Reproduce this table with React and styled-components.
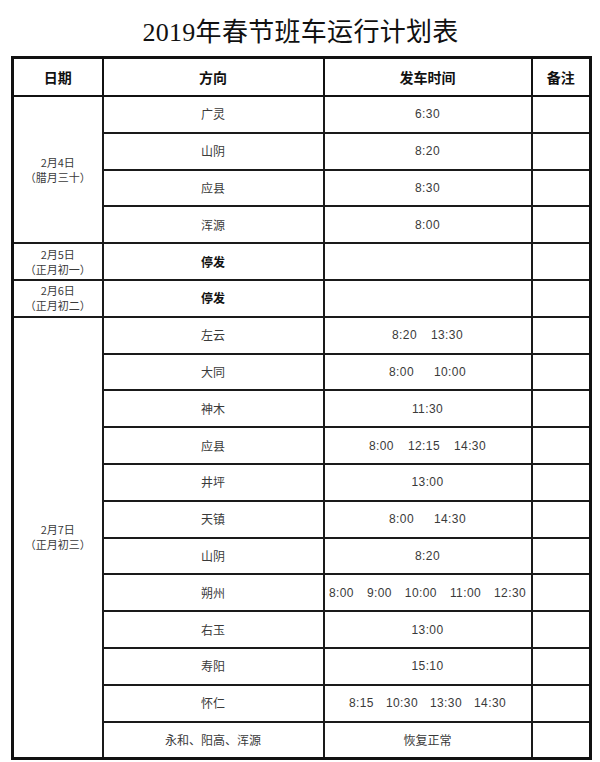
import React from 'react';
import styled, { createGlobalStyle } from 'styled-components';

const Global = createGlobalStyle`
  html, body { margin: 0; padding: 0; background: #fff; }
  body { font-family: "Noto Sans CJK SC", "Noto Sans", sans-serif; }
`;

const Page = styled.div`
  width: 600px;
  box-sizing: border-box;
  padding: 0 10px 0 11px;
`;

const Title = styled.h1`
  margin: 0;
  box-sizing: border-box;
  height: 56px;
  padding-top: 18px;
  font-family: "Liberation Serif", "Noto Sans CJK SC", serif;
  font-weight: 400;
  font-size: 26px;
  line-height: 30px;
  color: #111;
  text-align: center;
  letter-spacing: 0.3px;
`;

const Table = styled.table`
  width: 578px;
  table-layout: fixed;
  border-collapse: collapse;
  border: 3px solid #111;
`;

const HeadCell = styled.th`
  height: 36px;
  padding: 0;
  border: 2px solid #111;
  font-family: "Noto Sans CJK SC", sans-serif;
  font-weight: 700;
  font-size: 14px;
  color: #111;
  text-align: center;
  vertical-align: middle;
`;

const Row = styled.tr`
  height: 36.8px;
`;

const Cell = styled.td`
  padding: 0;
  border: 2px solid #1a1a1a;
  text-align: center;
  vertical-align: middle;
  font-family: "Noto Sans CJK SC", sans-serif;
  font-size: 12px;
  font-weight: ${p => (p.$bold ? 700 : 400)};
  color: ${p => (p.$bold ? '#111' : '#3a3a3a')};
  line-height: 16px;
`;

const DateLine = styled.div`
  font-size: 11px;
  line-height: 15px;
  color: #3a3a3a;
`;

const Times = styled.div`
  display: flex;
  justify-content: center;
  gap: ${p => p.$gap}px;
  font-family: "Liberation Sans", sans-serif;
  font-size: 12px;
  letter-spacing: 0.4px;
  color: #3a3a3a;
  white-space: nowrap;
`;

const schedule = [
  {
    date: '2月4日',
    lunar: '（腊月三十）',
    rows: [
      { dir: '广灵', times: ['6:30'] },
      { dir: '山阴', times: ['8:20'] },
      { dir: '应县', times: ['8:30'] },
      { dir: '浑源', times: ['8:00'] },
    ],
  },
  { date: '2月5日', lunar: '（正月初一）', rows: [{ dir: '停发', bold: true, times: [] }] },
  { date: '2月6日', lunar: '（正月初二）', rows: [{ dir: '停发', bold: true, times: [] }] },
  {
    date: '2月7日',
    lunar: '（正月初三）',
    rows: [
      { dir: '左云', times: ['8:20', '13:30'] },
      { dir: '大同', times: ['8:00', '10:00'], gap: 20 },
      { dir: '神木', times: ['11:30'] },
      { dir: '应县', times: ['8:00', '12:15', '14:30'] },
      { dir: '井坪', times: ['13:00'] },
      { dir: '天镇', times: ['8:00', '14:30'], gap: 20 },
      { dir: '山阴', times: ['8:20'] },
      { dir: '朔州', times: ['8:00', '9:00', '10:00', '11:00', '12:30'], gap: 13 },
      { dir: '右玉', times: ['13:00'] },
      { dir: '寿阳', times: ['15:10'] },
      { dir: '怀仁', times: ['8:15', '10:30', '13:30', '14:30'], gap: 12 },
      { dir: '永和、阳高、浑源', text: '恢复正常' },
    ],
  },
];

export default function App() {
  return (
    <Page>
      <Global />
      <Title>2019年春节班车运行计划表</Title>
      <Table>
        <colgroup>
          <col style={{ width: 90 }} />
          <col style={{ width: 221 }} />
          <col style={{ width: 208 }} />
          <col style={{ width: 59 }} />
        </colgroup>
        <thead>
          <tr>
            <HeadCell>日期</HeadCell>
            <HeadCell>方向</HeadCell>
            <HeadCell>发车时间</HeadCell>
            <HeadCell>备注</HeadCell>
          </tr>
        </thead>
        <tbody>
          {schedule.map(group =>
            group.rows.map((r, i) => (
              <Row key={group.date + i}>
                {i === 0 && (
                  <Cell rowSpan={group.rows.length}>
                    <DateLine>{group.date}</DateLine>
                    <DateLine>{group.lunar}</DateLine>
                  </Cell>
                )}
                <Cell $bold={r.bold}>{r.dir}</Cell>
                <Cell>
                  {r.text ? (
                    r.text
                  ) : (
                    <Times $gap={r.gap || 14}>
                      {r.times.map(t => (
                        <span key={t}>{t}</span>
                      ))}
                    </Times>
                  )}
                </Cell>
                <Cell />
              </Row>
            ))
          )}
        </tbody>
      </Table>
    </Page>
  );
}
